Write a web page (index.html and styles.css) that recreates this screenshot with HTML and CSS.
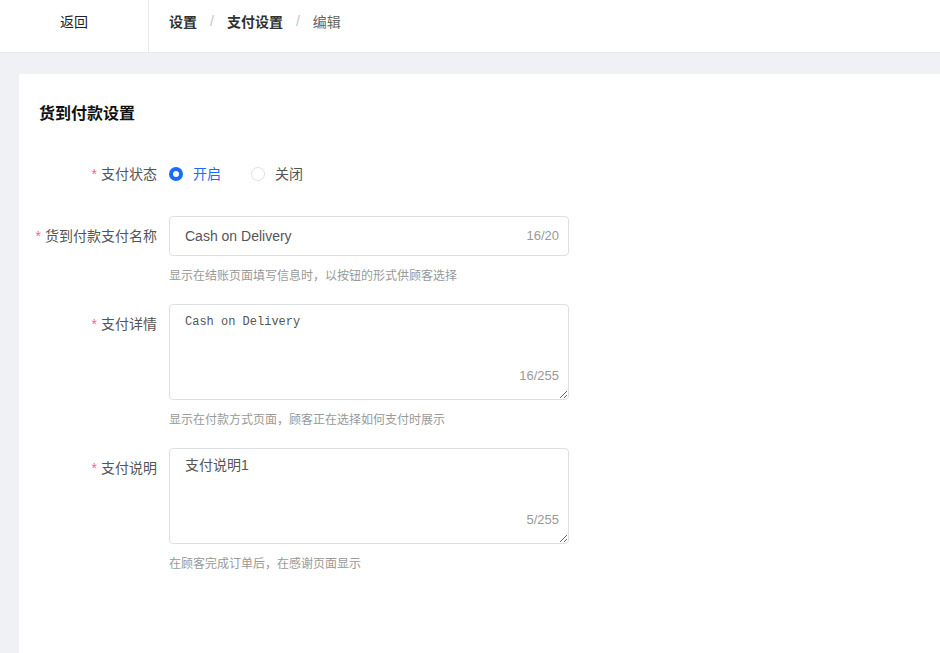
FILE: index.html
```html
<!DOCTYPE html>
<html lang="zh-CN">
<head>
<meta charset="utf-8">
<title>货到付款设置</title>
<link rel="stylesheet" href="styles.css">
</head>
<body>
<header class="topbar">
  <div class="back">返回</div>
  <nav class="crumbs">
    <span class="crumb strong">设置</span>
    <span class="sep">/</span>
    <span class="crumb strong">支付设置</span>
    <span class="sep">/</span>
    <span class="crumb current">编辑</span>
  </nav>
</header>
<main class="main">
  <section class="card">
    <h2 class="card-title">货到付款设置</h2>
    <form class="form">
      <div class="row row-radio">
        <label class="label"><span class="req">*</span>支付状态</label>
        <div class="control">
          <span class="radio checked"><span class="dot"></span><span class="radio-text">开启</span></span>
          <span class="radio"><span class="dot"></span><span class="radio-text">关闭</span></span>
        </div>
      </div>
      <div class="row">
        <label class="label"><span class="req">*</span>货到付款支付名称</label>
        <div class="control">
          <div class="input">
            <span class="input-text">Cash on Delivery</span>
            <span class="count">16/20</span>
          </div>
          <div class="help">显示在结账页面填写信息时，以按钮的形式供顾客选择</div>
        </div>
      </div>
      <div class="row">
        <label class="label"><span class="req">*</span>支付详情</label>
        <div class="control">
          <div class="textarea-wrap">
            <textarea class="textarea mono">Cash on Delivery</textarea>
            <span class="count count-area">16/255</span>
          </div>
          <div class="help">显示在付款方式页面，顾客正在选择如何支付时展示</div>
        </div>
      </div>
      <div class="row">
        <label class="label"><span class="req">*</span>支付说明</label>
        <div class="control">
          <div class="textarea-wrap">
            <textarea class="textarea">支付说明1</textarea>
            <span class="count count-area">5/255</span>
          </div>
          <div class="help">在顾客完成订单后，在感谢页面显示</div>
        </div>
      </div>
    </form>
  </section>
</main>
</body>
</html>
```

FILE: styles.css
```css
* { box-sizing: border-box; }
html, body {
  margin: 0;
  padding: 0;
  height: 100%;
}
body {
  background: #f0f1f5;
  font-family: "Liberation Sans", "Noto Sans CJK SC", sans-serif;
  color: #333;
  overflow: hidden;
}
.topbar {
  height: 53px;
  background: #fff;
  border-bottom: 1px solid #e8e9ee;
  display: flex;
  align-items: stretch;
}
.back {
  width: 149px;
  border-right: 1px solid #e8e9ee;
  display: flex;
  align-items: center;
  justify-content: center;
  font-size: 14px;
  color: #222;
  padding-bottom: 10px;
}
.crumbs {
  display: flex;
  align-items: center;
  padding-left: 20px;
  font-size: 14px;
  padding-bottom: 10px;
}
.crumb.strong { font-weight: bold; color: #303133; }
.crumb.current { color: #666; }
.sep {
  color: #c0c4cc;
  margin: 0 13px;
}
.main {
  padding: 21px 0 0 19px;
}
.card {
  background: #fff;
  min-height: 579px;
  padding: 28px 20px;
}
.card-title {
  margin: 0;
  font-size: 16px;
  line-height: 24px;
  font-weight: bold;
  color: #111;
}
.form {
  margin-top: 28px;
}
.row {
  display: flex;
  align-items: flex-start;
}
.row-radio {
  margin-bottom: 22px;
}
.label {
  width: 130px;
  flex: none;
  display: flex;
  justify-content: flex-end;
  white-space: nowrap;
  padding-right: 12px;
  font-size: 14px;
  line-height: 40px;
  color: #555;
}
.req {
  color: #f56c6c;
  margin-right: 4px;
}
.control {
  width: 400px;
}
.row-radio .control {
  height: 40px;
  display: flex;
  align-items: center;
}
.radio {
  display: inline-flex;
  align-items: center;
  font-size: 14px;
  line-height: 20px;
  color: #555;
  margin-right: 30px;
}
.dot {
  width: 14px;
  height: 14px;
  border-radius: 50%;
  border: 1px solid #dcdfe6;
  background: #fff;
  margin-right: 10px;
}
.radio.checked { color: #1a6cff; }
.radio.checked .dot {
  border: 4px solid #1a6cff;
  background: #fff;
}
.input {
  height: 40px;
  border: 1px solid #dcdfe6;
  border-radius: 4px;
  display: flex;
  align-items: center;
  justify-content: space-between;
  padding: 0 9px 0 15px;
}
.input-text {
  font-size: 14px;
  color: #555;
}
.count {
  font-size: 13px;
  color: #999;
  line-height: 16px;
}
.help {
  margin-top: 10px;
  margin-bottom: 18px;
  font-size: 12px;
  line-height: 20px;
  color: #999;
}
.textarea-wrap {
  position: relative;
  height: 96px;
}
.textarea {
  display: block;
  width: 100%;
  height: 96px;
  border: 1px solid #dcdfe6;
  border-radius: 4px;
  padding: 6px 15px;
  font-family: "Liberation Sans", "Noto Sans CJK SC", sans-serif;
  font-size: 14px;
  line-height: 20px;
  color: #555;
  resize: vertical;
  outline: none;
  background: #fff;
}
.textarea.mono {
  font-family: "Liberation Mono", "Noto Sans CJK SC", monospace;
  font-size: 12px;
  padding-top: 7px;
}
.count-area {
  position: absolute;
  right: 10px;
  bottom: 16px;
}
```
